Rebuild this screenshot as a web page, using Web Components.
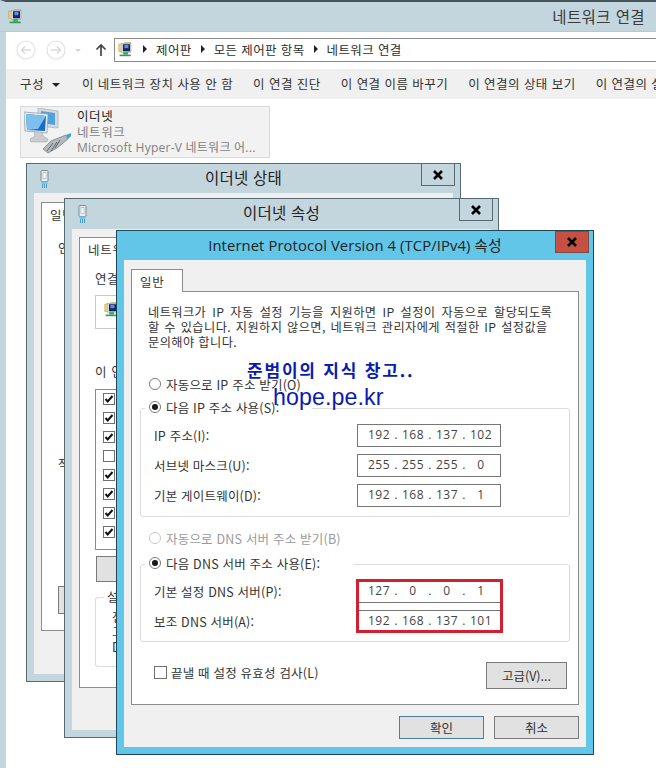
<!DOCTYPE html>
<html lang="ko">
<head>
<meta charset="utf-8">
<title>네트워크 연결</title>
<style>
  html, body { margin: 0; padding: 0; background: #fff; }
  body {
    width: 656px; height: 768px; overflow: hidden; position: relative;
    font: 12.5px "Noto Sans CJK KR", "Noto Sans", sans-serif; color: #333;
  }
  #w1 { left: 26px; top: 163px; width: 435px; height: 519px; }
  #w2 { left: 64px; top: 198px; width: 435px; height: 540px; }
  #w3 { left: 116px; top: 230px; width: 478px; height: 525px; }
</style>
</head>
<body>
<explorer-shell></explorer-shell>

<win-dialog id="w1" heading="이더넷 상태" title-height="29">
  <tab-panel label="일반" top="9" inset="7" bottom="43">
    <back-one></back-one>
  </tab-panel>
</win-dialog>

<win-dialog id="w2" heading="이더넷 속성" title-height="30">
  <tab-panel label="네트워킹" top="8" inset="7" bottom="42">
    <back-two></back-two>
  </tab-panel>
</win-dialog>

<win-dialog id="w3" heading="Internet Protocol Version 4 (TCP/IPv4) 속성" active title-height="29">
  <tab-panel label="일반" top="9" inset="7" bottom="42" tab-width="52">
    <ipv4-form></ipv4-form>
  </tab-panel>
  <div slot="footer" style="display:flex;justify-content:flex-end;gap:10px;padding-right:7px">
    <push-button default style="width:85px;height:23px">확인</push-button>
    <push-button style="width:85px;height:23px">취소</push-button>
  </div>
</win-dialog>

<script>
const NET_ICON = `<svg width="16" height="16" viewBox="0 0 20 20" style="display:block;flex:none">
  <path d="M1 4h6l1-2h8v11H1z" fill="#f0d878" stroke="#b09a48" stroke-width=".7"/>
  <rect x="4" y="3" width="12" height="11" fill="#fff" stroke="#8a8fa0" stroke-width=".7"/>
  <rect x="6" y="4" width="9" height="9" fill="#15265f"/>
  <rect x="8" y="5" width="5" height="4" fill="#5c8fe0"/>
  <rect x="6.500" y="14" width="6" height="3" fill="#38a85c"/>
  <rect x="2" y="17" width="14" height="2" fill="#2e9c50"/>
</svg>`;

const PLUG_ICON = `<svg width="9" height="18" viewBox="0 0 9 18" style="display:block">
  <rect x="1" y=".5" width="7" height="11" rx="1" fill="#e9eef0" stroke="#7d8b92"/>
  <rect x="3" y="2.500" width="3" height="6" fill="#fff" stroke="#9aa8ae" stroke-width=".6"/>
  <rect x="1.500" y="11.500" width="6" height="2.500" fill="#7fc4e8"/>
  <path d="M2.500 14v4M4.500 14v4M6.500 14v4" stroke="#4a9dc9" stroke-width="1"/>
</svg>`;

const CHECK = `<svg width="12" height="12" viewBox="0 0 12 12" style="display:block">
  <rect x=".5" y=".5" width="11" height="11" fill="#fff" stroke="#707070"/>
  <path d="M2.500 6l2.200 2.500L9.500 3" fill="none" stroke="#111" stroke-width="2"/>
</svg>`;

class ExplorerShell extends HTMLElement {
  constructor() {
    super();
    this.attachShadow({ mode: "open" });
  }
  connectedCallback() {
    const crumb = `<svg width="6" height="8" viewBox="0 0 6 8" style="flex:none"><path d="M1 0l4 4-4 4z" fill="#222"/></svg>`;
    const circle = d => `<svg width="20" height="20" viewBox="0 0 20 20" style="flex:none">
      <circle cx="10" cy="10" r="9" fill="#fff" stroke="#e2e2e2" stroke-width="1.200"/>
      <path d="${d}" fill="none" stroke="#dadada" stroke-width="1.400"/></svg>`;
    this.shadowRoot.innerHTML = `
      <style>
        :host { display: block; width: 656px; height: 768px; box-sizing: border-box;
          border-left: 6px solid #c3d5dd; border-top: 2px solid #46555c; background: #fff; letter-spacing: .45px; }
        .title { height: 30px; margin-left: -6px; background: #c3d5dd; border-bottom: 1px solid #b7c8d0; box-sizing: border-box;
          display: flex; align-items: center; justify-content: space-between; padding: 0 11px 2px 8px;
          font-size: 15.500px; color: #3a3a3a; letter-spacing: .4px; }
        .nav { height: 37px; box-sizing: border-box; display: flex; align-items: center; padding: 0 0 1px 10px; }
        .nav .up { margin: 0 7px 0 4px; display: block; flex: none; }
        .nav .drop { margin: 0 10px 0 9px; width: 0; height: 0; border: 3px solid transparent; border-top: 3px solid #d5d5d5; border-bottom: 0; }
        .nav .gap { width: 10px; flex: none; }
        .addr { flex: 1; height: 24px; box-sizing: border-box; border: 1px solid #8a8a8a; border-right: 0; letter-spacing: .38px;
          display: flex; align-items: center; gap: 8px; padding: 0 0 2px 3px; font-size: 12.500px; color: #2d2d2d; }
        .tools { height: 30px; box-sizing: border-box; background: #f0f0f0; display: flex; align-items: center; padding: 0 0 2px 14px;
          white-space: nowrap; overflow: hidden; font-size: 12.500px; color: #333; }
        .tools span { margin-right: 20px; flex: none; }
        .tools span:first-child { margin-right: 22px; }
        .tools i { display: inline-block; width: 0; height: 0; margin-left: 8px; vertical-align: 2px;
          border: 4px solid transparent; border-top: 4px solid #222; border-bottom: 0; }
        .content { padding: 7px 0 0 14px; }
        .item { width: 250px; height: 52px; box-sizing: border-box; background: #f2f2f2; border: 1px solid #dadada;
          display: flex; gap: 3px; padding: 1px 0 0 3px; line-height: 16px; font-size: 12.500px; letter-spacing: .6px; }
        .item b { font-weight: 400; color: #222; display: block; }
        .item em { font-style: normal; color: #808080; display: block; white-space: nowrap; }
        .item .hv { font-family: "Open Sans", "Noto Sans CJK KR", sans-serif; font-size: 12px; letter-spacing: .25px; }
      </style>
      <div class="title">${NET_ICON}<span>네트워크 연결</span></div>
      <div class="nav">
        ${circle("M15 10H6M9 6.500 5.500 10 9 13.500")}
        <span class="gap"></span>
        ${circle("M5 10h9M11 6.500l3.500 3.500L11 13.500")}
        <span class="drop"></span>
        <svg class="up" width="12" height="14" viewBox="0 0 12 14"><path d="M6 13V2M1.500 6.500 6 2l4.500 4.500" fill="none" stroke="#444" stroke-width="1.700"/></svg>
        <div class="addr">${NET_ICON}${crumb}<span>제어판</span>${crumb}<span>모든 제어판 항목</span>${crumb}<span>네트워크 연결</span></div>
      </div>
      <div class="tools">
        <span>구성<i></i></span><span>이 네트워크 장치 사용 안 함</span><span>이 연결 진단</span><span>이 연결 이름 바꾸기</span><span>이 연결의 상태 보기</span><span>이 연결의 설정 변경</span>
      </div>
      <div class="content">
        <div class="item">
          <svg width="50" height="48" viewBox="0 0 50 48" style="flex:none">
            <path d="M14 0l20 3v17L14 18z" fill="#d3dbe0" stroke="#a9b3b9" stroke-width=".8"/>
            <path d="M17 3l14 2v12l-14-2z" fill="#4fa2de"/>
            <path d="M0 4l24 2-1 19-22-2z" fill="#e8ecee" stroke="#98a3aa" stroke-width=".8"/>
            <path d="M2 6l20 2-1 15-18-1z" fill="#1b6cc8"/>
            <path d="M2 6l20 2-8 13-11 1z" fill="#7cc0ee"/>
            <path d="M10 24h8l1 4 5 3-1 3H7l-1-3 5-3z" fill="#c8cdd0" stroke="#a4abaf" stroke-width=".6"/>
            <path d="M19 41l8-8 15-6 2 4-11 9-9 5z" fill="#b4babe" stroke="#7b8388" stroke-width=".8"/>
            <path d="M23 43l6-8M27 43l6-9M31 40l5-8" stroke="#5d6468" stroke-width="1"/>
            <path d="M42 27l5-2v3l-3 3z" fill="#3ca6d8"/>
          </svg>
          <div><b>이더넷</b><em>네트워크</em><em class="hv">Microsoft Hyper-V 네트워크 어...</em></div>
        </div>
      </div>`;
  }
}

class WinDialog extends HTMLElement {
  constructor() {
    super();
    this.attachShadow({ mode: "open" });
  }
  connectedCallback() {
    const active = this.hasAttribute("active");
    const frame = active ? "#62c6e8" : "#c3d5dd";
    this.shadowRoot.innerHTML = `
      <style>
        :host { position: absolute; display: block; isolation: isolate; box-sizing: border-box; border: 1px solid ${active ? "#1f4656" : "#566a74"};
          background: ${frame}; font-family: "Noto Sans CJK KR", sans-serif; }
        .wrap { display: flex; flex-direction: column; height: 100%; }
        .bar { height: ${this.getAttribute("title-height")}px; flex: none; display: grid; grid-template-columns: 1fr auto 1fr; align-items: start; }
        .icon { padding: 6px 0 0 13px; }
        .head { font-family: "Open Sans", "Noto Sans CJK KR", sans-serif; font-size: ${active ? 14.800 : 15.500}px; color: #222; line-height: 28px; white-space: nowrap; letter-spacing: ${active ? ".1" : ".3"}px; }
        .close { justify-self: end; margin-right: ${active ? 4 : 5}px; width: 34px; height: 22px; box-sizing: border-box;
          border: 1px solid ${active ? "#7f4a42" : "#566a74"}; border-top: ${active ? "1px solid #7f4a42" : "0"}; background: ${active ? "#c75044" : "#c3d5dd"};
          display: flex; align-items: center; justify-content: center; }
        .client { flex: 1; margin: 0 7px 7px; background: #f0f0f0; min-height: 0; position: relative; overflow: hidden; }
        .foot { position: absolute; left: 0; right: 0; bottom: 8px; }
      </style>
      <div class="wrap">
        <div class="bar">
          <span class="icon">${active ? "" : PLUG_ICON}</span>
          <span class="head">${this.getAttribute("heading")}</span>
          <span class="close"><svg width="12" height="10" viewBox="0 0 12 10"><path d="M2 1l8 8M10 1 2 9" stroke="#000" stroke-width="2.600"/></svg></span>
        </div>
        <div class="client"><slot></slot><div class="foot"><slot name="footer"></slot></div></div>
      </div>`;
  }
}

class TabPanel extends HTMLElement {
  constructor() {
    super();
    this.attachShadow({ mode: "open" });
  }
  connectedCallback() {
    const top = this.getAttribute("top"), inset = this.getAttribute("inset"), bottom = this.getAttribute("bottom");
    const tw = this.getAttribute("tab-width") || 70;
    this.shadowRoot.innerHTML = `
      <style>
        :host { display: flex; flex-direction: column; box-sizing: border-box; height: 100%;
          padding: ${top}px ${inset}px ${bottom}px; }
        .tab { width: ${tw}px; height: 23px; box-sizing: border-box; background: #fff; border: 1px solid #8c8c8c; border-bottom: 0;
          font-size: 12.500px; letter-spacing: .7px; color: #333; padding: 2px 0 0 8px; position: relative; z-index: 1; margin-bottom: -1px; white-space: nowrap; overflow: hidden; }
        .body { flex: 1; background: #fff; border: 1px solid #8c8c8c; min-height: 0; position: relative; }
      </style>
      <div class="tab">${this.getAttribute("label")}</div>
      <div class="body"><slot></slot></div>`;
  }
}

class RadioRow extends HTMLElement {
  constructor() {
    super();
    this.attachShadow({ mode: "open" });
  }
  connectedCallback() {
    const on = this.hasAttribute("on"), off = this.hasAttribute("disabled");
    this.shadowRoot.innerHTML = `
      <style>
        :host { display: flex; align-items: center; gap: 5px; height: 16px; color: ${off ? "#9a9a9a" : "#333"}; white-space: nowrap; }
      </style>
      <svg width="12" height="12" viewBox="0 0 13 13">
        <circle cx="6.500" cy="6.500" r="6" fill="#fff" stroke="${off ? "#c4c4c4" : "#707070"}"/>
        ${on ? '<circle cx="6.500" cy="6.500" r="3.300" fill="#1a1a1a"/>' : ""}
      </svg>
      <slot></slot>`;
  }
}

class IpField extends HTMLElement {
  constructor() {
    super();
    this.attachShadow({ mode: "open" });
  }
  connectedCallback() {
    const parts = this.getAttribute("value").split(".");
    const cells = parts.map(p => `<span class="n">${p}</span>`).join(`<span class="d">.</span>`);
    this.shadowRoot.innerHTML = `
      <style>
        :host { display: flex; align-items: center; box-sizing: border-box; width: 144px; height: 23px; background: #fff;
          border: 1px solid #767676; font: 12px "Open Sans", sans-serif; color: #444; padding: 0 6px 2px 8px; }
        .n { flex: 1; text-align: center; letter-spacing: .5px; }
        .d { width: 8px; text-align: center; }
      </style>
      ${cells}`;
  }
}

class FieldRow extends HTMLElement {
  constructor() {
    super();
    this.attachShadow({ mode: "open" });
  }
  connectedCallback() {
    this.shadowRoot.innerHTML = `
      <style>
        :host { display: flex; align-items: center; justify-content: space-between; color: #333; }
      </style>
      <span><slot name="label"></slot></span>
      <slot></slot>`;
  }
}

class GroupBox extends HTMLElement {
  constructor() {
    super();
    this.attachShadow({ mode: "open" });
  }
  connectedCallback() {
    this.shadowRoot.innerHTML = `
      <style>
        :host { display: block; position: relative; box-sizing: border-box; border: 1px solid #dcdcdc; border-radius: 3px; }
        .legend { position: absolute; left: 4px; top: -12px; background: #fff; padding: 0 33px 0 4px; height: 20px; display: flex; align-items: center; }
      </style>
      <div class="legend"><slot name="legend"></slot></div>
      <slot></slot>`;
  }
}

class PushButton extends HTMLElement {
  constructor() {
    super();
    this.attachShadow({ mode: "open" });
  }
  connectedCallback() {
    const def = this.hasAttribute("default");
    this.shadowRoot.innerHTML = `
      <style>
        :host { display: flex; align-items: center; justify-content: center; box-sizing: border-box; flex: none;
          background: #e1e1e1; border: 1px solid ${def ? "#4f7f9e" : "#7a7a7a"}; color: #333; font-size: 12.500px; letter-spacing: 0; }
      </style>
      <slot></slot>`;
  }
}

class Ipv4Form extends HTMLElement {
  constructor() {
    super();
    this.attachShadow({ mode: "open" });
  }
  connectedCallback() {
    this.shadowRoot.innerHTML = `
      <style>
        :host { display: block; position: relative; height: 100%; box-sizing: border-box; padding: 13px 8px 0; font-size: 12.500px; letter-spacing: .2px; color: #333; }
        .intro { margin: 0 0 0 8px; line-height: 15px; white-space: nowrap; font-size: 12.200px; letter-spacing: .42px; }
        .l1 { word-spacing: 2.200px; }
        .l2 { word-spacing: .9px; }
        .r1 { margin: 26px 0 0 9px; }
        .g1 { height: 109px; margin-top: 16px; padding: 15px 0 0 13px; }
        .g1 field-row, .g2 field-row { width: 347px; }
        .rows { display: flex; flex-direction: column; gap: 7px; }
        .r3 { margin: 13px 0 0 9px; }
        .g2 { height: 78px; margin-top: 18px; padding: 15px 0 0 13px; }
        .rows2 { display: flex; flex-direction: column; gap: 7px; position: relative; }
        .red { position: absolute; left: 202px; top: -1px; width: 147px; height: 54px; box-sizing: border-box; border: 3px solid #d2202e; pointer-events: none; }
        .bottom { display: flex; align-items: center; justify-content: space-between; margin: 20px 3px 0 14px; }
        .check { display: flex; align-items: center; gap: 4px; margin-top: -7px; }
        .check i { width: 13px; height: 13px; border: 1px solid #707070; background: #fff; box-sizing: border-box; display: block; }
        .mark { position: absolute; left: 115px; top: 67px; color: #0a1bb0; pointer-events: none; white-space: nowrap; }
        .mark .a { font: 700 17px/22px "Noto Sans CJK KR", sans-serif; letter-spacing: 1.800px; display: block; }
        .mark .b { font: 400 23.200px/26px "Liberation Sans", sans-serif; letter-spacing: .1px; display: block; margin: 3px 0 0 26px; }
      </style>
      <p class="intro"><span class="l1">네트워크가 IP 자동 설정 기능을 지원하면 IP 설정이 자동으로 할당되도록</span><br><span class="l2">할 수 있습니다. 지원하지 않으면, 네트워크 관리자에게 적절한 IP 설정값을</span><br>문의해야 합니다.</p>
      <radio-row class="r1">자동으로 IP 주소 받기(O)</radio-row>
      <group-box class="g1">
        <radio-row slot="legend" on>다음 IP 주소 사용(S):</radio-row>
        <div class="rows">
          <field-row><span slot="label">IP 주소(I):</span><ip-field value="192.168.137.102"></ip-field></field-row>
          <field-row><span slot="label">서브넷 마스크(U):</span><ip-field value="255.255.255.0"></ip-field></field-row>
          <field-row><span slot="label">기본 게이트웨이(D):</span><ip-field value="192.168.137.1"></ip-field></field-row>
        </div>
      </group-box>
      <radio-row class="r3" disabled>자동으로 DNS 서버 주소 받기(B)</radio-row>
      <group-box class="g2">
        <radio-row slot="legend" on>다음 DNS 서버 주소 사용(E):</radio-row>
        <div class="rows2">
          <field-row><span slot="label">기본 설정 DNS 서버(P):</span><ip-field value="127.0.0.1"></ip-field></field-row>
          <field-row><span slot="label">보조 DNS 서버(A):</span><ip-field value="192.168.137.101"></ip-field></field-row>
          <div class="red"></div>
        </div>
      </group-box>
      <div class="bottom">
        <label class="check"><i></i><span>끝낼 때 설정 유효성 검사(L)</span></label>
        <push-button style="width:81px;height:27px">고급(V)...</push-button>
      </div>
      <div class="mark"><span class="a">준범이의 지식 창고..</span><span class="b">hope.pe.kr</span></div>`;
  }
}

class BackOne extends HTMLElement {
  constructor() {
    super();
    this.attachShadow({ mode: "open" });
  }
  connectedCallback() {
    this.shadowRoot.innerHTML = `
      <style>
        :host { display: block; height: 100%; position: relative; padding: 13px 0 0 16px; box-sizing: border-box; font-size: 12.500px; color: #333; }
        .bt { margin: 0; }
        .low { margin-top: 197px; }
        .btn { width: 60px; height: 28px; background: #e1e1e1; border: 1px solid #7a7a7a; box-sizing: border-box; margin-top: 113px; }
      </style>
      <p class="bt">인</p>
      <p class="bt low">작</p>
      <div class="btn"></div>`;
  }
}

class BackTwo extends HTMLElement {
  constructor() {
    super();
    this.attachShadow({ mode: "open" });
  }
  connectedCallback() {
    const rows = [1, 1, 1, 0, 1, 1, 1, 1].map(on => on
      ? CHECK
      : `<svg width="12" height="12" viewBox="0 0 12 12" style="display:block"><rect x=".5" y=".5" width="11" height="11" fill="#fff" stroke="#707070"/></svg>`).join("");
    this.shadowRoot.innerHTML = `
      <style>
        :host { display: block; height: 100%; padding: 10px 0 0 15px; box-sizing: border-box; font-size: 12.500px; color: #333; letter-spacing: .6px; }
        p { margin: 0; line-height: 18px; }
        .box { width: 60px; height: 34px; border: 1px solid #c8c8c8; box-sizing: border-box; margin-top: 7px; padding: 5px 0 0 8px; }
        .list { width: 60px; height: 161px; border: 1px solid #8a8a8a; border-right: 0; box-sizing: border-box; margin-top: 8px; padding: 3px 0 0 7px;
          display: flex; flex-direction: column; gap: 7px; }
        .btn { width: 60px; height: 26px; background: #e1e1e1; border: 1px solid #7a7a7a; box-sizing: border-box; margin: 6px 0 0 1px; }
        .set { margin-top: 15px; width: 60px; height: 70px; border: 1px solid #dcdcdc; border-right: 0; border-radius: 3px 0 0 3px; box-sizing: border-box; position: relative; padding: 11px 0 0 16px; line-height: 15px; }
        .set b { position: absolute; left: 8px; top: -9px; font-weight: 400; background: #fff; padding: 0 3px; line-height: 16px; }
      </style>
      <p>연결</p>
      <div class="box">${NET_ICON}</div>
      <p style="margin-top:34px">이 연</p>
      <div class="list">${rows}</div>
      <div class="btn"></div>
      <div class="set"><b>설</b>전<br>그<br>D</div>`;
  }
}

customElements.define("explorer-shell", ExplorerShell);
customElements.define("win-dialog", WinDialog);
customElements.define("tab-panel", TabPanel);
customElements.define("radio-row", RadioRow);
customElements.define("ip-field", IpField);
customElements.define("field-row", FieldRow);
customElements.define("group-box", GroupBox);
customElements.define("push-button", PushButton);
customElements.define("ipv4-form", Ipv4Form);
customElements.define("back-one", BackOne);
customElements.define("back-two", BackTwo);
</script>
</body>
</html>
